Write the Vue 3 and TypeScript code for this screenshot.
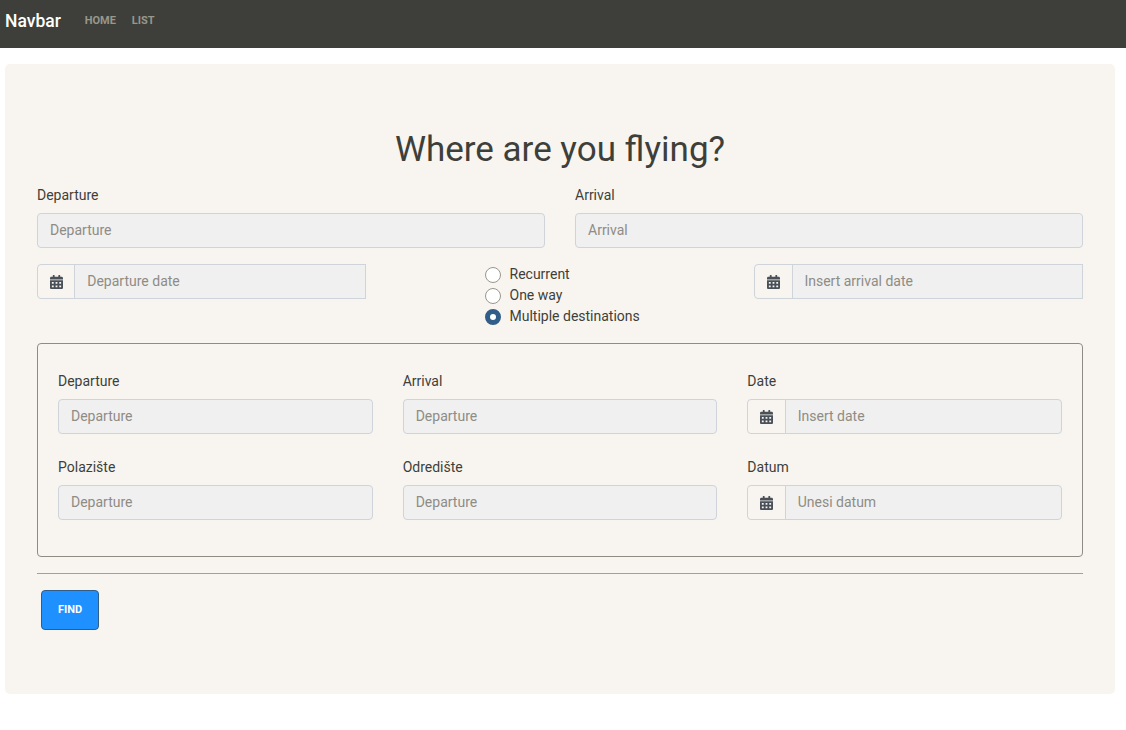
<script setup lang="ts">
import { ref } from 'vue'

interface LegField {
  label: string
  placeholder: string
  date?: boolean
}

const tripTypes: string[] = ['Recurrent', 'One way', 'Multiple destinations']
const tripType = ref<string>('Multiple destinations')

const legs: LegField[][] = [
  [
    { label: 'Departure', placeholder: 'Departure' },
    { label: 'Arrival', placeholder: 'Departure' },
    { label: 'Date', placeholder: 'Insert date', date: true },
  ],
  [
    { label: 'Polazište', placeholder: 'Departure' },
    { label: 'Odredište', placeholder: 'Departure' },
    { label: 'Datum', placeholder: 'Unesi datum', date: true },
  ],
]
const calendarPath =
  'M0 192v272c0 26.500 21.500 48 48 48h352c26.500 0 48-21.500 48-48V192H0zM128 436c0 6.600-5.400 12-12 12H76c-6.600 0-12-5.400-12-12v-40c0-6.600 5.400-12 12-12h40c6.600 0 12 5.400 12 12v40zm0-128c0 6.600-5.400 12-12 12H76c-6.600 0-12-5.400-12-12v-40c0-6.600 5.400-12 12-12h40c6.600 0 12 5.400 12 12v40zm128 128c0 6.600-5.400 12-12 12h-40c-6.600 0-12-5.400-12-12v-40c0-6.600 5.400-12 12-12h40c6.600 0 12 5.400 12 12v40zm0-128c0 6.600-5.400 12-12 12h-40c-6.600 0-12-5.400-12-12v-40c0-6.600 5.400-12 12-12h40c6.600 0 12 5.400 12 12v40zm128 128c0 6.600-5.400 12-12 12h-40c-6.600 0-12-5.400-12-12v-40c0-6.600 5.400-12 12-12h40c6.600 0 12 5.400 12 12v40zm0-128c0 6.600-5.400 12-12 12h-40c-6.600 0-12-5.400-12-12v-40c0-6.600 5.400-12 12-12h40c6.600 0 12 5.400 12 12v40zM448 160H0v-48c0-26.500 21.500-48 48-48h48V16c0-8.800 7.200-16 16-16h32c8.800 0 16 7.200 16 16v48h128V16c0-8.800 7.200-16 16-16h32c8.800 0 16 7.200 16 16v48h48c26.500 0 48 21.500 48 48v48z'
</script>

<template>
  <nav class="navbar">
    <a class="brand">Navbar</a>
    <a class="nav-link">Home</a>
    <a class="nav-link">List</a>
  </nav>
  <main class="jumbotron">
    <h1>Where are you flying?</h1>
    <div class="row two">
      <div>
        <label>Departure</label>
        <input class="control" type="text" placeholder="Departure" />
      </div>
      <div>
        <label>Arrival</label>
        <input class="control" type="text" placeholder="Arrival" />
      </div>
    </div>
    <div class="options">
      <div class="group square">
        <span class="addon"><svg viewBox="0 0 448 512" preserveAspectRatio="none"><path :d="calendarPath" /></svg></span>
        <input class="control" type="text" placeholder="Departure date" />
      </div>
      <div class="radios">
        <label v-for="type in tripTypes" :key="type" class="radio">
          <input v-model="tripType" type="radio" name="trip" :value="type" />
          <span>{{ type }}</span>
        </label>
      </div>
      <div class="group square">
        <span class="addon wide"><svg viewBox="0 0 448 512" preserveAspectRatio="none"><path :d="calendarPath" /></svg></span>
        <input class="control" type="text" placeholder="Insert arrival date" />
      </div>
    </div>
    <section class="legs">
      <div v-for="(leg, i) in legs" :key="i" class="row three">
        <div v-for="field in leg" :key="field.label">
          <label>{{ field.label }}</label>
          <div v-if="field.date" class="group">
            <span class="addon wide"><svg viewBox="0 0 448 512" preserveAspectRatio="none"><path :d="calendarPath" /></svg></span>
            <input class="control" type="text" :placeholder="field.placeholder" />
          </div>
          <input v-else class="control" type="text" :placeholder="field.placeholder" />
        </div>
      </div>
    </section>
    <hr />
    <button class="find" type="button">Find</button>
  </main>
</template>

<style>
body {
  background: #fff;
}
</style>

<style scoped>
.navbar,
.jumbotron {
  font-family: Roboto, 'Liberation Sans', sans-serif;
  font-size: 14px;
  line-height: 21px;
  color: #3e3f3a;
}
.navbar *,
.jumbotron * {
  box-sizing: border-box;
}
.navbar {
  box-sizing: border-box;
  height: 48px;
  padding: 0 5px 7px;
  display: flex;
  align-items: center;
  background: #3e3f3a;
}
.brand {
  margin-right: 15.800px;
  padding-top: 2px;
  font-size: 17.500px;
  font-weight: 500;
  color: #fff;
}
.nav-link {
  padding: 0 8px;
  font-size: 11px;
  font-weight: 700;
  text-transform: uppercase;
  color: #98978b;
}
.jumbotron {
  box-sizing: border-box;
  width: 1110px;
  height: 630px;
  margin: 16px 0 0 5px;
  padding: 65px 32px 64px;
  border-radius: 5px;
  background: #f8f5f0;
}
h1 {
  margin: 0 0 14px;
  font-size: 35px;
  font-weight: 400;
  line-height: 42px;
  text-align: center;
}
.row {
  display: grid;
  column-gap: 30px;
}
.two {
  grid-template-columns: repeat(2, 1fr);
}
.three {
  grid-template-columns: repeat(3, 1fr);
}
.row label {
  display: block;
  height: 21px;
  margin-bottom: 7px;
}
.control {
  display: block;
  width: 100%;
  min-width: 0;
  height: 35px;
  margin: 0;
  padding: 5px 12px 7px;
  border: 1px solid #ced4da;
  border-radius: 4px;
  background: #f0f0f0;
  color: #495057;
  font: inherit;
  outline: none;
}
.control::placeholder {
  color: #8e8c84;
  opacity: 1;
}
.options {
  display: grid;
  grid-template-columns: 329px 190px 329px;
  justify-content: space-between;
  margin: 16px 0;
}
.group {
  display: flex;
  height: 35px;
}
.group .control {
  flex: 1;
  border-radius: 0 4px 4px 0;
}
.square .control {
  border-radius: 0;
}
.addon {
  display: flex;
  flex: none;
  align-items: center;
  width: 38.250px;
  margin-right: -1px;
  padding: 1px 0 0 12px;
  border: 1px solid #ced4da;
  border-radius: 4px 0 0 4px;
}
.addon.wide {
  width: 39px;
}
.addon.wide + .control {
  padding-left: 11.400px;
}
.addon svg {
  flex: none;
  width: 13px;
  height: 14px;
  fill: #495057;
}
.radio {
  display: flex;
  height: 21px;
  padding-left: 20px;
}
.radio input {
  appearance: none;
  width: 16px;
  height: 16px;
  margin: 3px 8.500px 0 0;
  border: 1px solid #98978b;
  border-radius: 50%;
  background: #fff;
}
.radio input:checked {
  border: 5px solid #325d88;
}
.radio span {
  white-space: nowrap;
}
.legs {
  height: 214px;
  padding: 27px 20px 0;
  border: 1px solid #8e8c84;
  border-radius: 4px;
}
.legs .row + .row {
  margin-top: 23px;
}
hr {
  height: 1px;
  margin: 16px 0;
  border: 0;
  background: #ed7f7d;
}
.find {
  display: block;
  width: 58px;
  height: 40px;
  margin: 0 0 0 4px;
  padding: 0 0 1px;
  border: 1px solid #325d88;
  border-radius: 4px;
  background: #1e90ff;
  color: #fff;
  font: 700 11px/16px Roboto, 'Liberation Sans', sans-serif;
  text-transform: uppercase;
}
</style>
